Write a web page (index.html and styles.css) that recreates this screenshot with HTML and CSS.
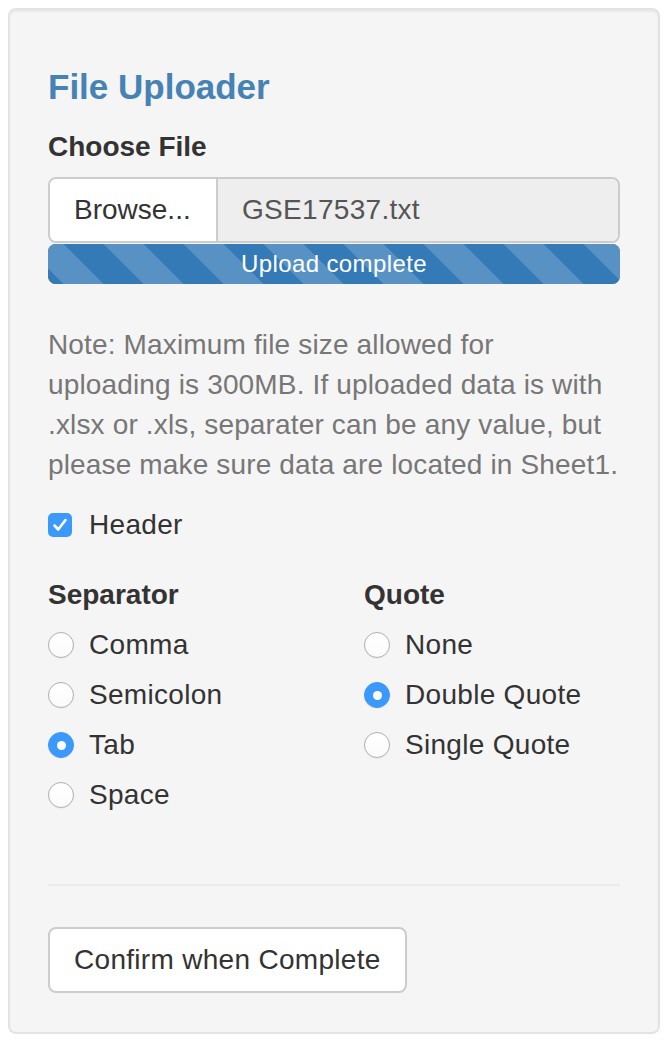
FILE: index.html
```html
<!DOCTYPE html>
<html>
<head>
<meta charset="utf-8">
<link rel="stylesheet" href="styles.css">
</head>
<body>
<div class="well">
  <h4 class="title">File Uploader</h4>
  <div class="form-group">
    <label class="control-label">Choose File</label>
    <div class="input-group">
      <span class="btn-browse">Browse...</span>
      <span class="file-name">GSE17537.txt</span>
    </div>
    <div class="progress"><div class="progress-bar">Upload complete</div></div>
  </div>
  <p class="help">Note: Maximum file size allowed for uploading is 300MB. If uploaded data is with .xlsx or .xls, separater can be any value, but please make sure data are located in Sheet1.</p>
  <div class="checkbox">
    <span class="check-box"><svg width="24" height="24" viewBox="0 0 24 24"><path d="M6.5 12.5 L10.2 16.5 L17.5 7" fill="none" stroke="#fff" stroke-width="2.6" stroke-linecap="round" stroke-linejoin="round"/></svg></span>
    <span>Header</span>
  </div>
  <div class="row">
    <div class="col">
      <label class="control-label">Separator</label>
      <div class="options">
        <div class="radio"><span class="radio-dot"></span><span>Comma</span></div>
        <div class="radio"><span class="radio-dot"></span><span>Semicolon</span></div>
        <div class="radio"><span class="radio-dot checked"></span><span>Tab</span></div>
        <div class="radio"><span class="radio-dot"></span><span>Space</span></div>
      </div>
    </div>
    <div class="col">
      <label class="control-label">Quote</label>
      <div class="options">
        <div class="radio"><span class="radio-dot"></span><span>None</span></div>
        <div class="radio"><span class="radio-dot checked"></span><span>Double Quote</span></div>
        <div class="radio"><span class="radio-dot"></span><span>Single Quote</span></div>
      </div>
    </div>
  </div>
  <hr class="divider">
  <button class="btn">Confirm when Complete</button>
</div>
</body>
</html>
```
FILE: styles.css
```css
* { box-sizing: border-box; }
html, body { margin: 0; padding: 0; background: #fff; }
body {
  padding: 8px;
  font-family: "Liberation Sans", Arial, sans-serif;
  font-size: 28px;
  line-height: 40px;
  letter-spacing: 0.3px;
  color: #333;
}
.well {
  background: #f5f5f5;
  border: 2px solid #e3e3e3;
  border-radius: 8px;
  box-shadow: inset 0 2px 2px rgba(0,0,0,0.05);
  padding: 38px;
  height: 1026px;
}
.title {
  margin: 19px 0 20px;
  font-size: 35px;
  line-height: 40px;
  font-weight: bold;
  letter-spacing: 0;
  color: #4682b4;
}
.control-label {
  display: block;
  font-weight: bold;
  letter-spacing: 0;
  margin-bottom: 10px;
}
.input-group {
  display: flex;
  height: 66px;
  border: 2px solid #ccc;
  border-radius: 8px;
  overflow: hidden;
}
.btn-browse {
  background: #fff;
  padding: 0 24px;
  display: flex;
  align-items: center;
  border-right: 2px solid #ccc;
  color: #333;
  width: 168px;
  letter-spacing: 0;
}
.file-name {
  flex: 1;
  background: #eee;
  padding: 0 24px;
  display: flex;
  align-items: center;
  color: #555;
}
.progress {
  margin-top: 1px;
  height: 40px;
  border-radius: 8px;
  overflow: hidden;
  background: #337ab7;
  box-shadow: inset 0 -2px 0 rgba(0,0,0,0.12);
}
.progress-bar {
  height: 100%;
  width: 100%;
  color: #fff;
  text-align: center;
  font-size: 24px;
  line-height: 40px;
  letter-spacing: 0.4px;
  background-color: #337ab7;
  background-image: linear-gradient(45deg, rgba(255,255,255,.18) 25%, transparent 25%, transparent 50%, rgba(255,255,255,.18) 50%, rgba(255,255,255,.18) 75%, transparent 75%, transparent);
  background-size: 80px 80px;
  background-position: -24px 0;
}
.help {
  margin: 41px 0 20px;
  color: #777;
  letter-spacing: 0.15px;
}
.checkbox {
  display: flex;
  align-items: center;
  gap: 17px;
  height: 40px;
  margin-bottom: 30px;
}
.check-box {
  width: 24px;
  height: 24px;
  border-radius: 5px;
  background: #3b99fc;
  display: flex;
}
.row {
  display: grid;
  grid-template-columns: 316px 1fr;
}
.options {
  display: flex;
  flex-direction: column;
  gap: 10px;
}
.radio {
  display: flex;
  align-items: center;
  gap: 15px;
  height: 40px;
}
.radio-dot {
  width: 26px;
  height: 26px;
  border-radius: 50%;
  background: linear-gradient(#fff, #fbfbfb);
  border: 1.5px solid #b0b0b0;
  box-shadow: 0 0.5px 1px rgba(0,0,0,0.08);
  position: relative;
}
.radio-dot.checked {
  background: #3b99fc;
  border-color: #3b99fc;
}
.radio-dot.checked::after {
  content: "";
  position: absolute;
  left: 50%;
  top: 50%;
  width: 9px;
  height: 9px;
  margin: -4.5px 0 0 -4.5px;
  border-radius: 50%;
  background: #fff;
}
.divider {
  margin: 69px 0 41px;
  border: 0;
  border-top: 2px solid #ebebeb;
  height: 0;
}
.btn {
  display: block;
  height: 66px;
  padding: 0 24px;
  background: #fff;
  border: 2px solid #ccc;
  border-radius: 8px;
  font-family: inherit;
  font-size: 28px;
  letter-spacing: 0.3px;
  color: #333;
}
```
